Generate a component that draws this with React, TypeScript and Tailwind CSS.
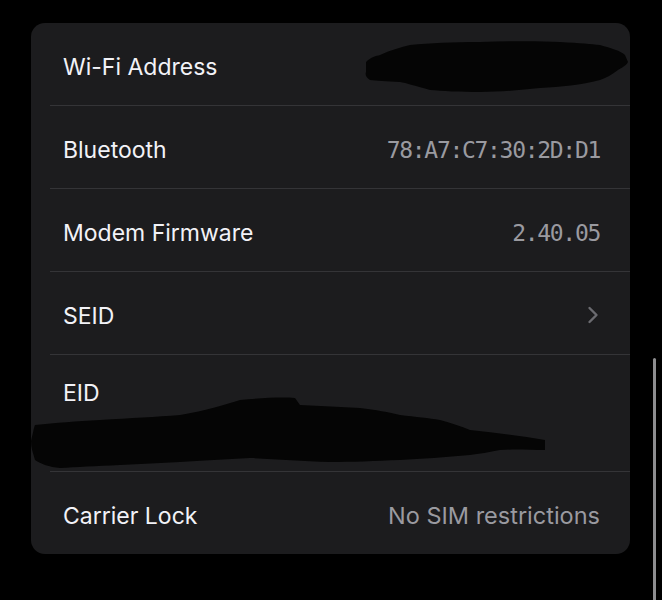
import React from "react";

const Row = ({ label, value, mono, chevron, last }: { label: string; value?: string; mono?: boolean; chevron?: boolean; last?: boolean }) => (
  <div className="relative">
    <div className="flex h-[82px] items-center justify-between pl-[32px] pr-[30px] pt-[6px]">
      <span className="text-[23px] text-[#f2f2f7]">{label}</span>
      {value && (
        <span
          className={
            mono
              ? "text-[23px] tracking-[-1.3px] text-[#9a9aa0] [font-family:'DejaVu_Sans_Mono','Liberation_Mono',monospace]"
              : "text-[23.5px] text-[#9a9aa0]"
          }
        >
          {value}
        </span>
      )}
      {chevron && (
        <svg width="12" height="18" viewBox="0 0 12 18" className="mr-[1px] -mt-[2px]">
          <path d="M2.5 2 L9.5 9 L2.5 16" fill="none" stroke="#6b6b70" strokeWidth="2.4" strokeLinecap="round" strokeLinejoin="round" />
        </svg>
      )}
    </div>
    {!last && <div className="ml-[19px] h-px bg-[#343437]" />}
  </div>
);

export default function App() {
  return (
    <div className="relative h-[600px] w-[662px] overflow-hidden bg-black [font-family:'Inter','Liberation_Sans',sans-serif]">
      <div className="pl-[31px] pt-[23px]">
        <div className="relative w-[599px] overflow-hidden rounded-[14px] bg-[#1c1c1e]">
          <Row label="Wi-Fi Address" />
          <Row label="Bluetooth" value="78:A7:C7:30:2D:D1" mono />
          <Row label="Modem Firmware" value="2.40.05" mono />
          <Row label="SEID" chevron />
          <div className="relative">
            <div className="h-[116px] pl-[32px] pt-[21px]">
              <span className="text-[23px] text-[#f2f2f7]">EID</span>
            </div>
            <div className="ml-[19px] h-px bg-[#343437]" />
          </div>
          <Row label="Carrier Lock" value="No SIM restrictions" last />
          {/* redaction scribbles */}
          <svg className="pointer-events-none absolute left-0 top-0" width="599" height="530" viewBox="0 0 599 530">
            <path
              d="M335 39 C 340 34, 345 33, 349 32 C 360 27, 370 24, 379 22 C 400 20, 420 19, 449 19 C 480 18, 510 18, 529 19 C 550 20, 560 21, 569 22 C 580 25, 590 28, 594 32 L 597 39 C 595 43, 590 45, 587 47 C 580 52, 575 55, 569 57 C 550 62, 530 64, 509 65 C 490 67, 470 69, 449 69 C 430 69, 410 68, 399 67 C 385 63, 375 60, 369 59 C 355 58, 345 58, 339 57 C 335 54, 334 52, 335 49 Z"
              fill="#050505"
            />
            <path
              d="M0 418 C 2 410, 3 404, 4 402 C 25 400, 45 398, 69 397 C 100 395, 125 394, 149 392 C 175 388, 195 381, 209 377 C 230 375, 250 374, 264 375 L 269 382 C 290 383, 310 384, 329 385 C 345 387, 358 389, 369 392 C 385 394, 398 395, 409 397 C 420 400, 430 403, 439 407 C 465 410, 490 413, 514 417 L 514 427 C 500 427, 485 426, 469 427 C 458 429, 448 431, 439 432 C 415 434, 390 436, 369 437 C 345 438, 320 439, 299 439 C 270 438, 245 436, 219 435 C 195 436, 170 438, 149 439 C 130 440, 110 441, 89 442 C 65 443, 45 444, 29 445 C 18 444, 10 441, 4 437 C 2 430, 0 425, 0 418 Z"
              fill="#050505"
            />
          </svg>
        </div>
      </div>
      <div className="absolute left-[653px] top-[358px] h-[260px] w-[3px] rounded-full bg-[#8e8e90]" />
    </div>
  );
}
